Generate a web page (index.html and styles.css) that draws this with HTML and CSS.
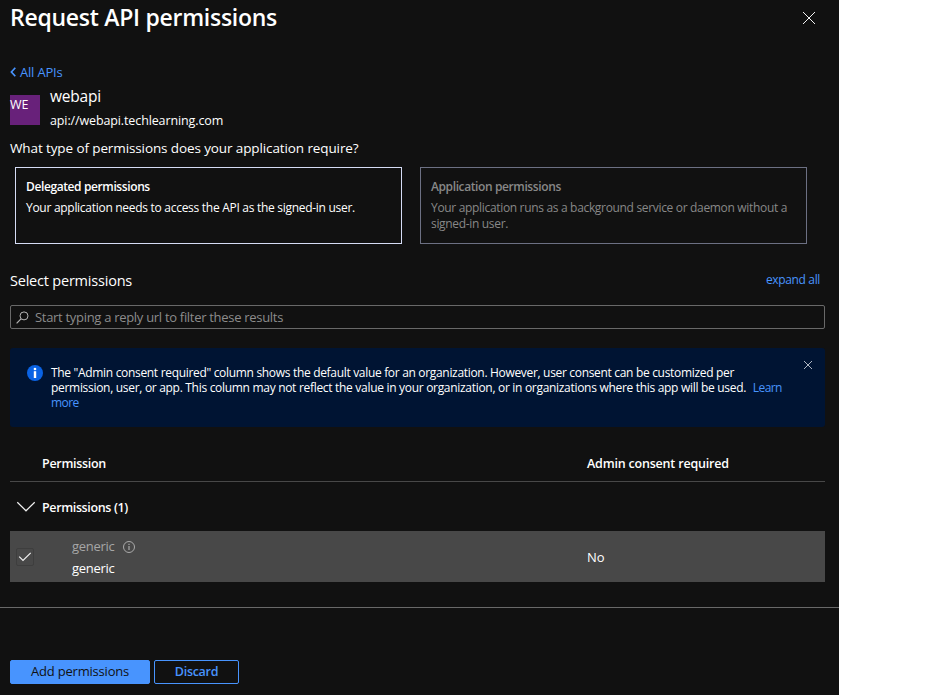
FILE: index.html
```html
<!DOCTYPE html>
<html lang="en">
<head>
<meta charset="utf-8">
<title>Request API permissions</title>
<link rel="stylesheet" href="styles.css">
</head>
<body>
<main class="panel">
  <header class="panel-header">
    <h1 class="title">Request API permissions</h1>
    <svg class="close" width="14" height="14" viewBox="0 0 14 14"><path d="M1 1L13 13M13 1L1 13" fill="none" stroke="#f2f2f2" stroke-width="1"/></svg>
  </header>

  <div class="content">
    <a class="back"><svg width="7" height="10" viewBox="0 0 7 10"><path d="M5.3 .7L1.4 5L5.3 9.3" fill="none" stroke="#4894fe" stroke-width="1.7"/></svg><span>All APIs</span></a>

    <section class="api">
      <div class="avatar">WE</div>
      <div class="api-text">
        <div class="api-name">webapi</div>
        <div class="api-url">api://webapi.techlearning.com</div>
      </div>
    </section>

    <p class="question">What type of permissions does your application require?</p>

    <div class="cards">
      <div class="card card-selected">
        <h2 class="card-title">Delegated permissions</h2>
        <p class="card-text">Your application needs to access the API as the signed-in user.</p>
      </div>
      <div class="card card-muted">
        <h2 class="card-title">Application permissions</h2>
        <p class="card-text">Your application runs as a background service or daemon without a<br>signed-in user.</p>
      </div>
    </div>

    <div class="select-row">
      <h2 class="select-title">Select permissions</h2>
      <a class="expand">expand all</a>
    </div>

    <div class="search">
      <svg width="13" height="13" viewBox="0 0 13 13"><circle cx="8" cy="4.9" r="4" fill="none" stroke="#b4b4b4" stroke-width="1"/><path d="M5 7.9L.6 12.4" stroke="#b4b4b4" stroke-width="1.2" fill="none"/></svg>
      <span class="placeholder">Start typing a reply url to filter these results</span>
    </div>

    <div class="info">
      <svg class="info-icon" width="16" height="16" viewBox="0 0 16 16"><circle cx="8" cy="8" r="8" fill="#0a63e4"/><circle cx="8" cy="4" r="1.35" fill="#fff"/><path d="M6.8 6.2H9.2V13H6.8Z" fill="#fff"/></svg>
      <p class="info-text"><span class="info-first">The "Admin consent required" column shows the default value for an organization. However, user consent can be customized per</span><br>permission, user, or app. This column may not reflect the value in your organization, or in organizations where this app will be used. <a class="learn">Learn<br>more</a></p>
      <svg class="info-close" width="10" height="10" viewBox="0 0 10 10"><path d="M1 1L9 9M9 1L1 9" fill="none" stroke="#c3c8d2" stroke-width=".9"/></svg>
    </div>

    <div class="grid-head">
      <span class="head-perm">Permission</span>
      <span class="head-consent">Admin consent required</span>
    </div>

    <div class="group">
      <svg width="20" height="12" viewBox="0 0 20 12"><path d="M1.3 1.2L10 9.8L18.7 1.2" fill="none" stroke="#f2f2f2" stroke-width="1.2"/></svg>
      <span class="group-name">Permissions (1)</span>
    </div>

    <div class="row">
      <span class="checkbox"><svg width="14" height="10" viewBox="0 0 14 10"><path d="M1.2 4.7L5 8.5L12.7 .9" fill="none" stroke="#f0f0f0" stroke-width="1.2"/></svg></span>
      <div class="perm">
        <div class="perm-name"><span>generic</span><svg class="perm-info" width="12" height="12" viewBox="0 0 12 12"><circle cx="6" cy="6" r="5.5" fill="none" stroke="#aaa" stroke-width="1"/><path d="M6 5V9M6 2.8V4" stroke="#aaa" stroke-width="1.2" fill="none"/></svg></div>
        <div class="perm-desc">generic</div>
      </div>
      <span class="consent">No</span>
    </div>
  </div>

  <footer class="footer">
    <button class="btn btn-primary">Add permissions</button>
    <button class="btn btn-outline">Discard</button>
  </footer>
</main>
</body>
</html>
```
FILE: styles.css
```css
* { box-sizing: border-box; }
body {
  margin: 0;
  background: #fff;
  color: #fff;
  font-family: "Open Sans", "Noto Sans", sans-serif;
  font-size: 13px;
  overflow: hidden;
}
h1, h2, p { margin: 0; font-weight: 400; }
svg { display: block; flex: none; }

.panel { width: 839px; height: 695px; background: #111; overflow: hidden; }

.panel-header {
  display: flex;
  justify-content: space-between;
  height: 34px;
  padding: 0 23px 0 10px;
}
.title { font-size: 23px; line-height: 34px; font-weight: 600; letter-spacing: -.27px; }
.close { margin-top: 11px; }

.content { padding: 28px 14px 0 10px; height: 573px; }

.back {
  display: flex;
  align-items: center;
  gap: 3px;
  height: 20px;
  color: #4894fe;
  letter-spacing: -.19px;
}

.api { display: flex; gap: 10px; margin-top: 4px; }
.avatar {
  width: 30px;
  height: 30px;
  margin-top: 9px;
  background: #68217a;
  font-size: 12.5px;
  line-height: 19px;
}
.api-name { font-size: 15.5px; line-height: 20px; letter-spacing: -.2px; }
.api-url { font-size: 12.5px; line-height: 20px; margin-top: 5px; letter-spacing: -.12px; }

.question { margin-top: 7px; font-size: 13.5px; line-height: 20px; letter-spacing: -.11px; }

.cards { display: flex; gap: 18px; margin: 9px 0 0 5px; }
.card { width: 387px; height: 77px; padding: 11px 10px 0; border: 1px solid #d5dcf5; white-space: nowrap; }
.card-title { font-size: 12px; line-height: 16px; font-weight: 600; letter-spacing: -.39px; }
.card-text { margin-top: 5px; font-size: 12px; line-height: 16px; letter-spacing: -.285px; }
.card-muted { border-color: #6c7083; color: #888; }
.card-muted .card-text { letter-spacing: -.325px; }

.select-row { display: flex; justify-content: space-between; margin-top: 27px; padding-right: 5px; line-height: 20px; }
.select-title { font-size: 14.5px; letter-spacing: -.21px; }
.expand { color: #4894fe; font-size: 12px; line-height: 17px; letter-spacing: -.35px; }

.search {
  display: flex;
  align-items: center;
  gap: 6px;
  height: 24px;
  margin-top: 14px;
  padding-left: 5px;
  border: 1px solid #696969;
  border-radius: 2px;
}
.placeholder { color: #8c8c8c; letter-spacing: -.3px; }

.info {
  display: flex;
  height: 79px;
  margin-top: 19px;
  padding: 17px 12px 0 17px;
  background: #001433;
  border-radius: 3px;
}
.info-text {
  flex: 1;
  margin-left: 8px;
  font-size: 12px;
  line-height: 15px;
  letter-spacing: -.303px;
  white-space: nowrap;
}
.info-first { letter-spacing: -.319px; }
.learn { margin-left: 4px; color: #4894fe; letter-spacing: -.6px; }
.info-close { margin-top: -5px; }

.grid-head {
  display: flex;
  height: 37px;
  margin-top: 18px;
  padding-left: 32px;
  border-bottom: 1px solid #484848;
  font-size: 12.5px;
  font-weight: 600;
  line-height: 38px;
}
.head-perm { width: 545px; letter-spacing: -.29px; }
.head-consent { letter-spacing: -.19px; }

.group {
  display: flex;
  align-items: center;
  gap: 6px;
  height: 49px;
  padding: 0 0 0 6px;
  font-size: 12.5px;
  font-weight: 600;
  letter-spacing: -.36px;
}
.group-name { padding-top: 1px; }

.row {
  display: flex;
  align-items: center;
  height: 51px;
  padding-left: 6px;
  background: #484848;
}
.checkbox {
  display: flex;
  align-items: center;
  justify-content: center;
  width: 18px;
  height: 18px;
  border: 1px solid #3e3e3e;
  border-radius: 2px;
}
.perm { width: 515px; margin-left: 38px; line-height: 22px; letter-spacing: -.28px; }
.perm-name { display: flex; align-items: center; gap: 8px; color: #a6a6a6; }
.perm-info { margin-top: 2px; }
.consent { letter-spacing: -.1px; }

.footer {
  display: flex;
  gap: 4px;
  height: 88px;
  padding: 52px 10px 0;
  border-top: 1px solid #696969;
}
.btn {
  height: 24px;
  padding: 0;
  border: 1px solid #4894fe;
  border-radius: 2px;
  font-family: inherit;
  font-size: 13px;
  line-height: 22px;
}
.btn-primary { width: 140px; padding-bottom: 2px; background: #4894fe; color: #111; letter-spacing: -.2px; line-height: 20px; }
.btn-outline { width: 85px; background: transparent; color: #4894fe; font-size: 12.5px; font-weight: 600; letter-spacing: -.3px; }
```
